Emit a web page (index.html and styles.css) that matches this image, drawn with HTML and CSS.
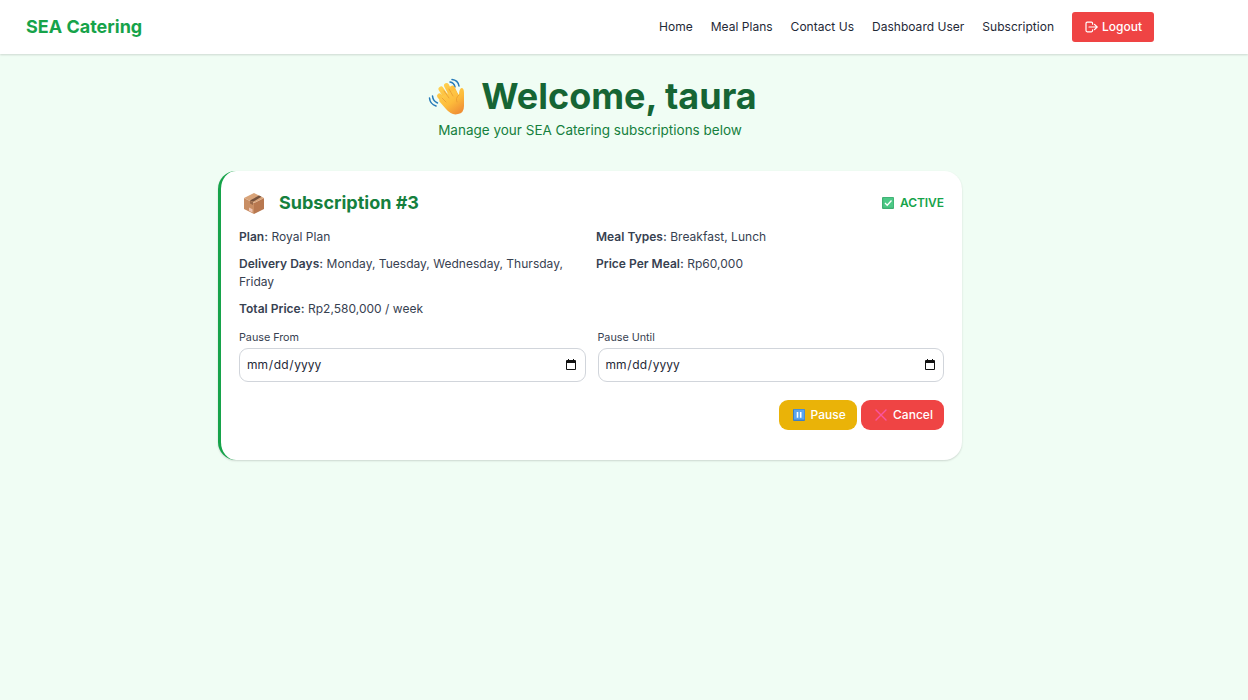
FILE: index.html
```html
<!DOCTYPE html>
<html lang="en">
<head>
<meta charset="utf-8">
<title>SEA Catering</title>
<link rel="stylesheet" href="styles.css">
</head>
<body>
<header class="navbar">
  <a class="brand">SEA Catering</a>
  <nav class="links">
    <a>Home</a><a>Meal Plans</a><a>Contact Us</a><a>Dashboard User</a><a>Subscription</a>
    <button class="logout">
      <svg class="logout-icon" viewBox="0 0 13 12" fill="none" stroke="currentColor" stroke-width="1.2" stroke-linecap="round" stroke-linejoin="round"><path d="M7.6 3.2V2.4Q7.6 1.2 6.4 1.2H2.2Q1 1.2 1 2.4V9.6Q1 10.8 2.2 10.8H6.4Q7.6 10.8 7.6 9.6V8.8M4 6H12M9.5 3.3L12.2 6L9.5 8.7"/></svg>
      <span>Logout</span>
    </button>
  </nav>
</header>
<main class="page">
  <div class="hero">
    <h1 class="title">
      <svg class="wave" viewBox="0 0 38 38">
        <defs><linearGradient id="skin" x1="0" y1="0" x2=".7" y2="1"><stop offset="0" stop-color="#ffd454"/><stop offset=".6" stop-color="#fdbc3b"/><stop offset="1" stop-color="#f09035"/></linearGradient></defs>
        <g fill="none" stroke="#2479b8" stroke-width="1.5" stroke-linecap="round"><path d="M22 4Q26 4.500 27 9M24 1.500Q30 2 31 8M4.500 18Q5 23 9.500 25M1.500 20Q2 26 8 28"/></g>
        <g fill="none" stroke="url(#skin)" stroke-width="5" stroke-linecap="round"><path d="M13 11L21 23M18.500 7.500L25 20M24.500 10L29 20M11.500 18L19 27"/></g>
        <path fill="url(#skin)" d="M14 18L27 12L31 17Q31 11 33.500 10Q36 10 36 15V28Q36 35 30 36Q24 38 18 31L11 23Z"/>
        <path fill="none" stroke="#e99b32" stroke-width=".8" stroke-linecap="round" d="M16 13L21 20M21 11L25 18M14 20L18 24M31 17Q27 20 29 24"/>
      </svg>
      <span>Welcome, taura</span>
    </h1>
    <p class="subtitle">Manage your SEA Catering subscriptions below</p>
  </div>
  <section class="card">
    <div class="card-head">
      <h2 class="card-title">
        <svg class="box" viewBox="0 0 22 23"><path fill="#c98e64" d="M1 6L11 11V22L1 17Z"/><path fill="#b87850" d="M21 6L11 11V22L21 17Z"/><path fill="#d8a379" d="M11 1L21 6L11 11L1 6Z"/><path fill="#75513c" d="M7 8.500L16 3.500L18.500 4.800L10 9.800Z"/><path fill="#99694a" d="M7 8.500L10 10V13L7 11.500Z"/><path fill="#efc5b4" d="M6 15.500L9.500 17.200V20.500L6 18.800Z"/></svg>
        <span>Subscription #3</span>
      </h2>
      <div class="status">
        <svg class="emoji" viewBox="0 0 12 12"><rect width="12" height="12" rx="1" fill="#3fae72"/><rect x="1.300" y=".8" width="10" height="9.800" fill="#4cc986"/><path d="M3 6L5.200 8.200L9.500 3.500" fill="none" stroke="#fff" stroke-width="1.300"/></svg>
        <span>ACTIVE</span>
      </div>
    </div>
    <div class="details">
      <p><strong>Plan:</strong> Royal Plan</p>
      <p><strong>Meal Types:</strong> Breakfast, Lunch</p>
      <p><strong>Delivery Days:</strong> Monday, Tuesday, Wednesday, Thursday, Friday</p>
      <p><strong>Price Per Meal:</strong> Rp60,000</p>
      <p><strong>Total Price:</strong> Rp2,580,000 / week</p>
    </div>
    <div class="dates">
      <div class="field"><span class="label">Pause From</span>
        <div class="input"><span class="date-text">mm<i>/</i>dd<i>/</i>yyyy</span><svg class="calendar" viewBox="0 0 10 11"><path fill="#111" d="M1 1H2V0H3V1H7V0H8V1H9Q10 1 10 2V10Q10 11 9 11H1Q0 11 0 10V2Q0 1 1 1ZM1 4V10H9V4Z" fill-rule="evenodd"/></svg></div>
      </div>
      <div class="field"><span class="label">Pause Until</span>
        <div class="input"><span class="date-text">mm<i>/</i>dd<i>/</i>yyyy</span><svg class="calendar" viewBox="0 0 10 11"><path fill="#111" d="M1 1H2V0H3V1H7V0H8V1H9Q10 1 10 2V10Q10 11 9 11H1Q0 11 0 10V2Q0 1 1 1ZM1 4V10H9V4Z" fill-rule="evenodd"/></svg></div>
      </div>
    </div>
    <div class="actions">
      <button class="btn pause"><svg class="emoji" viewBox="0 0 12 12"><rect width="12" height="12" rx="1" fill="#3d7fc4"/><rect x="1" y=".6" width="10.400" height="10" fill="#5ba5ef"/><path d="M4.500 3V8.800M7.700 3V8.800" stroke="#fff" stroke-width="1.600"/></svg><span>Pause</span></button>
      <button class="btn cancel"><svg class="emoji" viewBox="0 0 12 12"><path d="M1 1L11 11M11 1L1 11" fill="none" stroke="#fa55a0" stroke-width="1.400" stroke-linecap="round"/></svg><span>Cancel</span></button>
    </div>
  </section>
</main>
</body>
</html>
```

FILE: styles.css
```css
* { box-sizing: border-box; margin: 0; }
body { min-height: 700px; background: #f0fdf4; font-family: Inter, "Liberation Sans", sans-serif; font-size: 12px; line-height: 18px; letter-spacing: .02px; color: #374151; }
button { font: inherit; letter-spacing: inherit; border: 0; color: #fff; display: flex; align-items: center; }
svg { display: block; flex: none; }
.navbar { height: 54px; display: flex; align-items: center; justify-content: space-between; padding: 0 94px 0 26px; background: #fff; box-shadow: 0 1px 2px rgba(0,0,0,.15); }
.brand { font-size: 18px; font-weight: 700; letter-spacing: 0; color: #16a34a; }
.links { display: flex; align-items: center; gap: 18px; color: #1f2937; }
.logout { height: 30px; width: 82px; padding: 0 0 0 13px; gap: 4px; border-radius: 3px; background: #ef4444; font-weight: 500; }
.logout-icon { width: 13px; height: 12px; }
.page { width: 1180px; padding-top: 22px; }
.hero { display: flex; flex-direction: column; align-items: center; height: 95px; }
.title { display: flex; align-items: center; gap: 15px; height: 41px; font-size: 36px; line-height: 41px; font-weight: 700; letter-spacing: 0; color: #166534; padding-left: 5px; }
.wave { width: 38px; height: 38px; }
.subtitle { margin-top: 3px; font-size: 13.5px; line-height: 20px; letter-spacing: 0; color: #15803d; }
.card { width: 744px; height: 289px; margin: 0 auto; padding: 18px; border-left: 3px solid #16a34a; border-radius: 18px; background: #fff; box-shadow: 0 1px 2px rgba(0,0,0,.15); }
.card-head { display: flex; align-items: center; justify-content: space-between; height: 27px; margin-bottom: 12px; }
.card-title { display: flex; align-items: center; gap: 14px; padding-left: 4px; font-size: 18px; line-height: 27px; font-weight: 700; letter-spacing: 0; color: #15803d; }
.box { width: 22px; height: 23px; margin-top: 1px; }
.status { display: flex; align-items: center; gap: 6px; font-weight: 600; letter-spacing: -.05px; color: #16a34a; }
.emoji { width: 12px; height: 12px; }
.details { display: grid; grid-template-columns: 1fr 1fr; gap: 9px; }
.details strong { font-weight: 600; }
.dates { display: grid; grid-template-columns: 1fr 1fr; gap: 12px; margin-top: 13px; }
.label { display: block; font-size: 10.8px; line-height: 14px; margin-bottom: 3px; letter-spacing: -.03px; }
.input { display: flex; align-items: center; justify-content: space-between; height: 34px; padding: 0 8.500px 0 7px; border: 1px solid #d1d5db; border-radius: 9px; color: #1f2937; }
.date-text i { font-style: normal; padding: 0 .7px; }
.calendar { width: 10px; height: 11px; margin-top: -1px; }
.actions { display: flex; justify-content: flex-end; gap: 4px; margin-top: 18px; }
.btn { height: 30px; padding: 0 0 0 14px; gap: 6px; border-radius: 9px; font-weight: 500; }
.pause { width: 78px; padding-left: 13.500px; background: #eab308; }
.cancel { width: 83px; background: #ef4444; }
```
